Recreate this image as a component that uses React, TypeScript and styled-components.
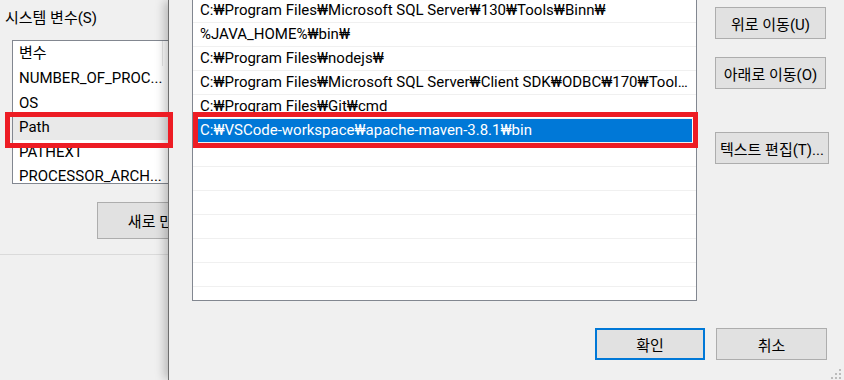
import React from 'react';
import styled, { createGlobalStyle } from 'styled-components';

const GlobalStyle = createGlobalStyle`
  html, body {
    margin: 0;
    padding: 0;
  }
  body {
    width: 844px;
    height: 380px;
    overflow: hidden;
    background: #f0f0f0;
    font-family: Roboto, "Noto Sans CJK KR", sans-serif;
    font-size: 15px;
    color: #000;
  }
`;

const Desktop = styled.div`
  position: relative;
  width: 844px;
  height: 380px;
  overflow: hidden;
  background: #f0f0f0;
`;

/* ---- back window: 환경 변수 ---- */

const BackWindow = styled.div`
  position: absolute;
  left: 0;
  top: 0;
  width: 420px;
  height: 380px;
  display: flex;
  flex-direction: column;
  background: #f0f0f0;
`;

const GroupLabel = styled.div`
  padding: 8px 0 0 5px;
  height: 20px;
  line-height: 20px;
  white-space: nowrap;
`;

const VarList = styled.div`
  margin: 12px 0 0 12px;
  width: 320px;
  height: 144px;
  box-sizing: border-box;
  border: 1px solid #828790;
  background: #fff;
  overflow: hidden;
`;

const VarHeader = styled.div`
  display: flex;
  height: 25px;
`;

const HeaderCell = styled.div`
  width: 143px;
  padding-left: 6px;
  border-right: 1px solid #e5e5e5;
  line-height: 25px;
`;

const VarRow = styled.div<{ $selected?: boolean }>`
  height: 24.6px;
  line-height: 24.6px;
  padding-left: 6px;
  white-space: nowrap;
  background: ${p => (p.$selected ? '#e9e9e9' : 'transparent')};
`;

const NewButton = styled.button`
  margin: 18px 0 0 97px;
  width: 170px;
  height: 37px;
  box-sizing: border-box;
  border: 1px solid #adadad;
  background: #e1e1e1;
  font: inherit;
  color: #000;
  padding: 0;
  white-space: nowrap;
`;

const Divider = styled.div`
  margin-top: 15px;
  height: 1px;
  background: #dadada;
`;

/* ---- front window: 환경 변수 편집 ---- */

const FrontWindow = styled.div`
  position: absolute;
  left: 168px;
  top: 0;
  right: 0;
  height: 380px;
  box-sizing: border-box;
  border-left: 1px solid #6e6e6e;
  background: #f0f0f0;
  box-shadow: -5px 0 9px -1px rgba(0, 0, 0, 0.22);
  display: grid;
  grid-template-columns: 505px minmax(0, 1fr);
  grid-template-rows: auto 1fr;
  column-gap: 18px;
  padding: 0 17px 0 23px;
`;

const PathList = styled.div`
  margin-top: -2px;
  height: 303px;
  box-sizing: border-box;
  border: 1px solid #828790;
  background: #fff;
  overflow: hidden;
`;

const PathRow = styled.div`
  height: 24px;
  box-sizing: border-box;
  border-bottom: 1px solid #f0f0f0;
`;

const PathText = styled.div<{ $selected?: boolean }>`
  margin: 0 4px;
  padding-left: 3px;
  height: 23px;
  line-height: 23px;
  white-space: nowrap;
  overflow: hidden;
  text-overflow: ellipsis;
  background: ${p => (p.$selected ? '#0078d7' : 'transparent')};
  color: ${p => (p.$selected ? '#fff' : '#000')};
`;

const SideButtons = styled.div`
  display: flex;
  flex-direction: column;
  align-items: flex-start;
  padding-top: 7px;
`;

const DlgButton = styled.button<{ $gap?: number; $focused?: boolean }>`
  margin-top: ${p => p.$gap ?? 0}px;
  min-width: 111px;
  height: 32px;
  padding: 0 4px;
  box-sizing: border-box;
  border: ${p => (p.$focused ? '2px solid #0078d7' : '1px solid #adadad')};
  background: #e1e1e1;
  font: inherit;
  color: #000;
  white-space: nowrap;
`;

const Footer = styled.div`
  grid-column: 1 / -1;
  display: flex;
  justify-content: flex-end;
  align-items: flex-start;
  gap: 11px;
  padding-top: 27px;
`;

const OkButton = styled(DlgButton)`
  min-width: 110px;
`;

const Grip = styled.svg`
  position: absolute;
  right: 2px;
  bottom: 0;
`;

const Highlight = styled.div<{ $left: number; $width: number }>`
  position: absolute;
  top: 112px;
  left: ${p => p.$left}px;
  width: ${p => p.$width}px;
  height: 36px;
  box-sizing: border-box;
  border: 5px solid #ed1c24;
  pointer-events: none;
`;

const systemVars = [
  'NUMBER_OF_PROC...',
  'OS',
  'Path',
  'PATHEXT',
  'PROCESSOR_ARCH...',
];

const paths = [
  'C:₩Program Files₩Microsoft SQL Server₩130₩Tools₩Binn₩',
  '%JAVA_HOME%₩bin₩',
  'C:₩Program Files₩nodejs₩',
  'C:₩Program Files₩Microsoft SQL Server₩Client SDK₩ODBC₩170₩Tools₩Binn₩',
  'C:₩Program Files₩Git₩cmd',
  'C:₩VSCode-workspace₩apache-maven-3.8.1₩bin',
  '', '', '', '', '', '', '',
];

const App: React.FC = () => {
  return (
    <Desktop>
      <GlobalStyle />

      <BackWindow>
        <GroupLabel>시스템 변수(S)</GroupLabel>
        <VarList>
          <VarHeader>
            <HeaderCell>변수</HeaderCell>
          </VarHeader>
          {systemVars.map(name => (
            <VarRow key={name} $selected={name === 'Path'}>{name}</VarRow>
          ))}
        </VarList>
        <NewButton>새로 만들기(W)...</NewButton>
        <Divider />
      </BackWindow>

      <FrontWindow>
        <PathList>
          {paths.map((p, i) => (
            <PathRow key={i}>
              <PathText $selected={i === 5}>{p}</PathText>
            </PathRow>
          ))}
        </PathList>

        <SideButtons>
          <DlgButton>위로 이동(U)</DlgButton>
          <DlgButton $gap={18}>아래로 이동(O)</DlgButton>
          <DlgButton $gap={43}>텍스트 편집(T)...</DlgButton>
        </SideButtons>

        <Footer>
          <OkButton $focused>확인</OkButton>
          <DlgButton>취소</DlgButton>
        </Footer>

        <Grip width="12" height="12" viewBox="0 0 12 12">
          <g fill="#bcbcbc">
            <rect x="9" y="1" width="2" height="2" />
            <rect x="9" y="5" width="2" height="2" />
            <rect x="5" y="5" width="2" height="2" />
            <rect x="9" y="9" width="2" height="2" />
            <rect x="5" y="9" width="2" height="2" />
            <rect x="1" y="9" width="2" height="2" />
          </g>
        </Grip>
      </FrontWindow>

      <Highlight $left={5} $width={168} />
      <Highlight $left={193} $width={505} />
    </Desktop>
  );
};

export default App;
